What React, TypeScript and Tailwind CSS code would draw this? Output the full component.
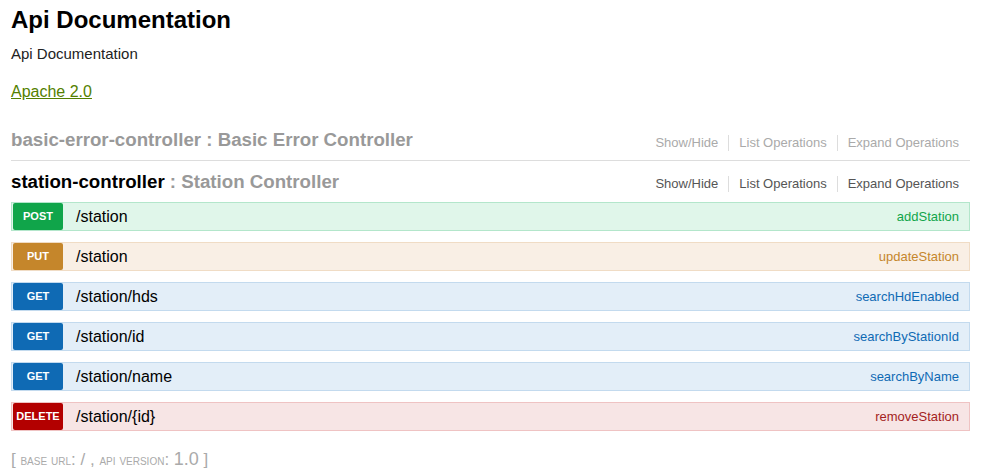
import React from 'react';

type Op = {
  method: string;
  path: string;
  summary: string;
  row: string;
  badge: string;
  text: string;
};

const ops: Op[] = [
  { method: 'POST', path: '/station', summary: 'addStation', row: 'bg-[#e0f6ea] border-[#b3e6cb]', badge: 'bg-[#10a54a]', text: 'text-[#10a54a]' },
  { method: 'PUT', path: '/station', summary: 'updateStation', row: 'bg-[#f9efe5] border-[#f0dcc5]', badge: 'bg-[#c5862b]', text: 'text-[#c5862b]' },
  { method: 'GET', path: '/station/hds', summary: 'searchHdEnabled', row: 'bg-[#e3eef8] border-[#c3daee]', badge: 'bg-[#0f6ab4]', text: 'text-[#0f6ab4]' },
  { method: 'GET', path: '/station/id', summary: 'searchByStationId', row: 'bg-[#e3eef8] border-[#c3daee]', badge: 'bg-[#0f6ab4]', text: 'text-[#0f6ab4]' },
  { method: 'GET', path: '/station/name', summary: 'searchByName', row: 'bg-[#e3eef8] border-[#c3daee]', badge: 'bg-[#0f6ab4]', text: 'text-[#0f6ab4]' },
  { method: 'DELETE', path: '/station/{id}', summary: 'removeStation', row: 'bg-[#f7e5e5] border-[#efc3c3]', badge: 'bg-[#b30000]', text: 'text-[#a41e22]' },
];

function Actions({ dim }: { dim?: boolean }) {
  const color = dim ? 'text-[#aaaaaa]' : 'text-[#555555]';
  return (
    <ul className={`mt-[4px] flex items-center text-[13px] ${color}`}>
      <li className="pr-[10px] border-r border-[#dddddd] leading-[16px]">Show/Hide</li>
      <li className="px-[10px] border-r border-[#dddddd] leading-[16px]">List Operations</li>
      <li className="pl-[10px] pr-[11px] leading-[16px]">Expand Operations</li>
    </ul>
  );
}

export default function App() {
  return (
    <div className="w-[995px] h-[471px] bg-white pl-[11px] pr-[25px] font-['Liberation_Sans',Arial,sans-serif] text-[#333333]">
      <h1 className="text-[24px] font-bold text-black leading-[28px] pt-[6px]">Api Documentation</h1>
      <p className="text-[15px] leading-[18px] mt-[11px] text-[#222222]">Api Documentation</p>
      <a className="block w-fit text-[16px] leading-[18px] mt-[20px] text-[#547f00] underline">Apache 2.0</a>

      <div className="mt-[24px] flex items-center justify-between h-[36px] border-b border-[#dddddd] pb-[4px]">
        <h2 className="text-[18.7px] font-bold text-[#999999]">basic-error-controller : Basic Error Controller</h2>
        <Actions dim />
      </div>

      <div className="flex items-center justify-between h-[41px] pt-px">
        <h2 className="text-[18.7px] font-bold text-[#999999]">
          <span className="text-black">station-controller</span> : Station Controller
        </h2>
        <Actions />
      </div>

      <div className="flex flex-col gap-[11px]">
        {ops.map((op, i) => (
          <div key={i} className={`flex items-center h-[29px] border ${op.row}`}>
            <span className={`ml-px w-[50px] h-[27px] rounded-[2px] flex items-center justify-center text-[11px] font-bold text-white ${op.badge}`}>
              {op.method}
            </span>
            <span className="ml-[13px] text-[16px] text-black flex-1">{op.path}</span>
            <span className={`text-[13px] pr-[10px] ${op.text}`}>{op.summary}</span>
          </div>
        ))}
      </div>

      <div className="mt-[19px] text-[#aaaaaa] text-[17px] leading-[18px]">
        [ <span className="[font-variant:small-caps] text-[14px]">base url</span>: / , <span className="[font-variant:small-caps] text-[14px]">api version</span>: <span className="text-[18px]">1.0</span> ]
      </div>
    </div>
  );
}
